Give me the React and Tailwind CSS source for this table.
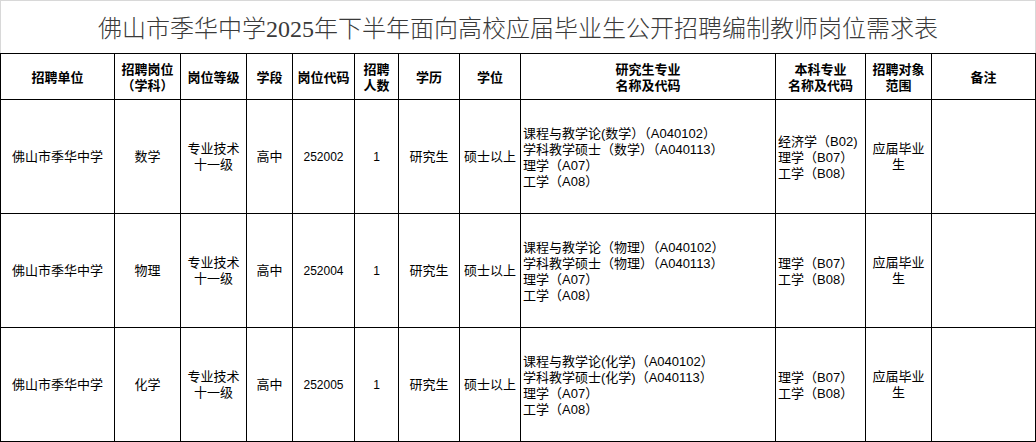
import React from "react";

const head = [
  ["招聘单位"],
  ["招聘岗位", "（学科）"],
  ["岗位等级"],
  ["学段"],
  ["岗位代码"],
  ["招聘", "人数"],
  ["学历"],
  ["学位"],
  ["研究生专业", "名称及代码"],
  ["本科专业", "名称及代码"],
  ["招聘对象", "范围"],
  ["备注"],
];

const rows = [
  {
    subj: "数学",
    code: "252002",
    grad: [
      "课程与教学论(数学）（A040102）",
      "学科教学硕士（数学）（A040113）",
      "理学（A07）",
      "工学（A08）",
    ],
    ug: ["经济学（B02)", "理学（B07）", "工学（B08）"],
  },
  {
    subj: "物理",
    code: "252004",
    grad: [
      "课程与教学论（物理）（A040102）",
      "学科教学硕士（物理）（A040113）",
      "理学（A07）",
      "工学（A08）",
    ],
    ug: ["理学（B07）", "工学（B08）"],
  },
  {
    subj: "化学",
    code: "252005",
    grad: [
      "课程与教学论(化学)（A040102）",
      "学科教学硕士(化学)（A040113）",
      "理学（A07）",
      "工学（A08）",
    ],
    ug: ["理学（B07）", "工学（B08）"],
  },
];

function C({ children, left }) {
  return (
    <div
      className={
        "bg-white flex flex-col justify-center " +
        (left ? "items-start pl-[2px] text-left" : "items-center text-center px-[4px]")
      }
    >
      {children}
    </div>
  );
}

export default function App() {
  return (
    <div
      className="w-[1036px] h-[442px] bg-white text-black overflow-hidden"
      style={{ fontFamily: '"Liberation Sans","Noto Sans CJK SC",sans-serif' }}
    >
      <div className="h-[53px] border-t border-l border-r border-[#d8d8d8] flex items-center justify-center pt-[3px]">
        <div
          className="text-[24px] leading-none text-[#3a3a3a] font-light whitespace-nowrap"
          style={{ fontFamily: '"Liberation Serif","Noto Sans CJK SC",serif' }}
        >
          佛山市季华中学2025年下半年面向高校应届毕业生公开招聘编制教师岗位需求表
        </div>
      </div>
      <div className="grid grid-cols-[113px_65px_65px_45px_61px_43px_60px_60px_254px_89px_65px_103px] grid-rows-[45px_113px_113px_113px] gap-px bg-black p-px w-[1036px] h-[389px]">
        {head.map((h, i) => (
          <div
            key={i}
            className="bg-white flex flex-col items-center justify-center text-center text-[13px] leading-[16px] font-bold"
            style={{ fontFamily: '"Noto Sans CJK SC",sans-serif' }}
          >
            {h.map((l, j) => (
              <div key={j}>{l}</div>
            ))}
          </div>
        ))}
        {rows.map((r, i) => (
          <React.Fragment key={i}>
            <C>
              <span className="text-[13px] leading-[16px]">佛山市季华中学</span>
            </C>
            <C>
              <span className="text-[13px] leading-[16px]">{r.subj}</span>
            </C>
            <C>
              <span className="text-[13px] leading-[16px]">
                专业技术
                <br />
                十一级
              </span>
            </C>
            <C>
              <span className="text-[13px] leading-[16px]">高中</span>
            </C>
            <C>
              <span className="text-[12px] leading-[16px]">{r.code}</span>
            </C>
            <C>
              <span className="text-[12px] leading-[16px]">1</span>
            </C>
            <C>
              <span className="text-[13px] leading-[16px]">研究生</span>
            </C>
            <C>
              <span className="text-[13px] leading-[16px] whitespace-nowrap">硕士以上</span>
            </C>
            <C left>
              <div className="text-[13px] leading-[16px] whitespace-nowrap pt-[3px]">
                {r.grad.map((g, j) => (
                  <div key={j}>{g}</div>
                ))}
              </div>
            </C>
            <C left>
              <div className="text-[13px] leading-[16px] whitespace-nowrap pt-[2px]">
                {r.ug.map((g, j) => (
                  <div key={j}>{g}</div>
                ))}
              </div>
            </C>
            <C>
              <span className="text-[13px] leading-[16px]">
                应届毕业
                <br />
                生
              </span>
            </C>
            <C>
              <span />
            </C>
          </React.Fragment>
        ))}
      </div>
    </div>
  );
}
